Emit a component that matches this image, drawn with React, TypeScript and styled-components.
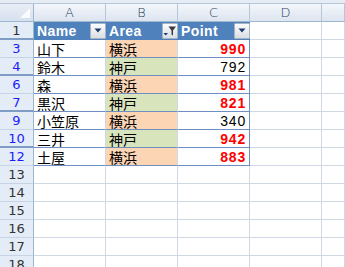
import React from 'react'
import styled, { createGlobalStyle } from 'styled-components'

const Global = createGlobalStyle`
  html, body {
    margin: 0;
    padding: 0;
    background: #ffffff;
  }
  body {
    font-family: "Liberation Sans", "Noto Sans CJK JP", sans-serif;
  }
`

const Sheet = styled.div`
  width: 345px;
  height: 267px;
  overflow: hidden;
  background: #ffffff;
`

const TopStrip = styled.div`
  height: 3px;
  background: #e6ecf4;
  border-bottom: 1px solid #b7c6da;
`

const Grid = styled.div`
  display: grid;
  grid-template-columns: 34px 72px 72px 72px 72px 1fr;
  grid-auto-rows: 18px;
`

const Corner = styled.div`
  position: relative;
  box-sizing: border-box;
  background: linear-gradient(#e9eef6, #d6e0ee);
  border-right: 1px solid #9eb6ce;
  border-bottom: 1px solid #9eb6ce;

  &::after {
    content: '';
    position: absolute;
    right: 3px;
    bottom: 3px;
    width: 0;
    height: 0;
    border-left: 10px solid transparent;
    border-bottom: 10px solid #ffffff;
    opacity: 0.85;
  }
`

const ColHead = styled.div`
  box-sizing: border-box;
  background: linear-gradient(#f3f6fb, #dde5f0);
  border-right: 1px solid #b5c5da;
  border-bottom: 1px solid #9eb6ce;
  display: flex;
  align-items: center;
  justify-content: center;
  font-size: 13px;
  line-height: 1;
  color: #27415f;
  font-family: "DejaVu Sans", sans-serif;
  font-weight: 300;
`

const RowHead = styled.div<{ $filtered?: boolean; $gap?: boolean }>`
  box-sizing: border-box;
  background: #e4ecf7;
  border-right: 1px solid #9eb6ce;
  border-bottom: ${(p) => (p.$gap ? '2px solid #7e9cc4' : '1px solid #c5d3e5')};
  display: flex;
  align-items: center;
  justify-content: center;
  font-size: 13px;
  line-height: 1;
  color: ${(p) => (p.$filtered ? '#1a1aff' : '#333333')};
  font-family: "DejaVu Sans", sans-serif;
  padding-top: ${(p) => (p.$gap ? '1px' : '0')};
`

const Cell = styled.div<{ $bg?: string; $table?: boolean; $last?: boolean }>`
  box-sizing: border-box;
  background: ${(p) => p.$bg || '#ffffff'};
  border-right: 1px solid ${(p) => (p.$last ? '#6f8fc0' : '#d0d7e5')};
  border-bottom: 1px solid ${(p) => (p.$table ? '#6f8fc0' : '#d0d7e5')};
  display: flex;
  align-items: center;
  padding: 0 3px;
  font-size: 14px;
  line-height: 1;
  color: #000000;
  font-family: "Noto Sans CJK JP", sans-serif;
  white-space: nowrap;
  overflow: hidden;
`

const HeadCell = styled.div`
  box-sizing: border-box;
  background: #4f81bd;
  border-bottom: 1px solid #4f81bd;
  display: flex;
  align-items: center;
  justify-content: space-between;
  padding: 0 0 0 3px;
  color: #ffffff;
  font-weight: bold;
  font-size: 14px;
  line-height: 1;
  letter-spacing: 0.4px;
`

const FilterBtn = styled.div`
  box-sizing: border-box;
  width: 16px;
  height: 16px;
  border: 1px solid #a9b4c2;
  border-radius: 1px;
  background: linear-gradient(#fbfcfd, #d9dee6);
  display: flex;
  align-items: center;
  justify-content: center;
`

const PointCell = styled(Cell)<{ $high?: boolean }>`
  justify-content: flex-end;
  font-family: "Liberation Sans", sans-serif;
  font-size: 14px;
  letter-spacing: 0.8px;
  padding-right: 3px;
  color: ${(p) => (p.$high ? '#ff0000' : '#000000')};
  font-weight: ${(p) => (p.$high ? 'bold' : 'normal')};
`

const Arrow = () => (
  <svg width="8" height="5" viewBox="0 0 8 5">
    <path d="M0.5 0.5 H7.5 L4 4.5 Z" fill="#1f3a6e" />
  </svg>
)

const Funnel = () => (
  <svg width="14" height="12" viewBox="0 0 14 12">
    <path d="M0.5 8 H5 L2.75 10.5 Z" fill="#1f3a6e" />
    <path d="M5.5 1.5 H13 L10 5.5 V10.5 L8.5 9.5 V5.5 Z" fill="#3a3a3a" />
  </svg>
)

type Row = { n: number; name: string; area: string; point: number; gap?: boolean }

const rows: Row[] = [
  { n: 3, name: '山下', area: '横浜', point: 990 },
  { n: 4, name: '鈴木', area: '神戸', point: 792, gap: true },
  { n: 6, name: '森', area: '横浜', point: 981 },
  { n: 7, name: '黒沢', area: '神戸', point: 821, gap: true },
  { n: 9, name: '小笠原', area: '横浜', point: 340 },
  { n: 10, name: '三井', area: '神戸', point: 942, gap: true },
  { n: 12, name: '土屋', area: '横浜', point: 883 },
]

const areaBg = (a: string) => (a === '横浜' ? '#fcd5b4' : '#d8e4bc')

const App = () => {
  const empty = [13, 14, 15, 16, 17, 18]
  return (
    <Sheet>
      <Global />
      <TopStrip />
      <Grid>
        <Corner />
        <ColHead>A</ColHead>
        <ColHead>B</ColHead>
        <ColHead>C</ColHead>
        <ColHead>D</ColHead>
        <ColHead />

        <RowHead $gap>1</RowHead>
        <HeadCell>
          Name
          <FilterBtn>
            <Arrow />
          </FilterBtn>
        </HeadCell>
        <HeadCell>
          Area
          <FilterBtn>
            <Funnel />
          </FilterBtn>
        </HeadCell>
        <HeadCell>
          Point
          <FilterBtn>
            <Arrow />
          </FilterBtn>
        </HeadCell>
        <Cell />
        <Cell />

        {rows.map((r) => (
          <React.Fragment key={r.n}>
            <RowHead $filtered $gap={r.gap}>
              {r.n}
            </RowHead>
            <Cell $table>{r.name}</Cell>
            <Cell $table $bg={areaBg(r.area)}>
              {r.area}
            </Cell>
            <PointCell $table $last $high={r.point > 800}>
              {r.point}
            </PointCell>
            <Cell />
            <Cell />
          </React.Fragment>
        ))}

        {empty.map((n) => (
          <React.Fragment key={n}>
            <RowHead>{n}</RowHead>
            <Cell />
            <Cell />
            <Cell />
            <Cell />
            <Cell />
          </React.Fragment>
        ))}
      </Grid>
    </Sheet>
  )
}

export default App
